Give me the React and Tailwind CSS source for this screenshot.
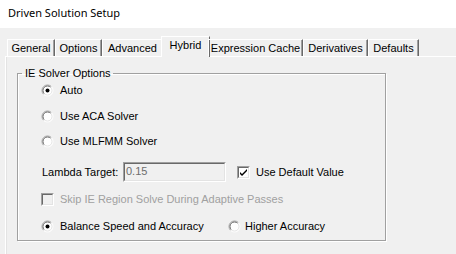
const F = { fontFamily: '"Liberation Sans", Arial, sans-serif' };

function Radio({ checked }) {
  return (
    <svg width="13" height="13" viewBox="0 0 13 13" className="shrink-0">
      <circle cx="6.5" cy="6.5" r="5.5" fill="#ffffff" />
      <path d="M2.6 10.4 A5.5 5.5 0 0 1 10.4 2.6" fill="none" stroke="#a0a0a0" strokeWidth="1" />
      <path d="M3.3 9.7 A4.5 4.5 0 0 1 9.7 3.3" fill="none" stroke="#696969" strokeWidth="1" />
      <path d="M10.4 2.6 A5.5 5.5 0 0 1 2.6 10.4" fill="none" stroke="#ffffff" strokeWidth="1" />
      <path d="M9.7 3.3 A4.5 4.5 0 0 1 3.3 9.7" fill="none" stroke="#e3e3e3" strokeWidth="1" />
      {checked && <circle cx="6.5" cy="6.5" r="2" fill="#000000" />}
    </svg>
  );
}

function Check({ checked, disabled }) {
  return (
    <div
      className={`w-[13px] h-[13px] shrink-0 border border-t-[#a0a0a0] border-l-[#a0a0a0] border-b-white border-r-white ${disabled ? 'bg-[#f0f0f0]' : 'bg-white'}`}
    >
      <div className="w-full h-full border border-t-[#696969] border-l-[#696969] border-b-[#e3e3e3] border-r-[#e3e3e3] flex items-center justify-center">
        {checked && (
          <svg width="7" height="7" viewBox="0 0 7 7">
            <path d="M0 3 L0 5 L2 7 L7 2 L7 0 L2 5 Z" fill="#000" />
          </svg>
        )}
      </div>
    </div>
  );
}

export default function App() {
  const tabs = [
    ['General', 48],
    ['Options', 47],
    ['Advanced', 61],
    ['Hybrid', 45, true],
    ['Expression Cache', 95],
    ['Derivatives', 65],
    ['Defaults', 51],
  ];
  return (
    <div className="w-[456px] h-[254px] overflow-hidden bg-[#f0f0f0] text-[11px] text-black" style={F}>
      <div
        className="h-[28px] bg-white pl-[8px] pt-[5px] text-[11px] leading-[16px] text-[#000]"
        style={{ fontFamily: '"Noto Sans", "Open Sans", sans-serif' }}
      >
        Driven Solution Setup
      </div>
      <div className="mt-[8px] h-[21px] -mb-px pl-[7px] flex items-start relative z-10">
        {tabs.map(([t, w, active]) =>
          active ? (
            <div
              key={t}
              className="h-[21px] -mx-[2px] bg-[#f0f0f0] border-t border-l border-t-white border-l-white border-r border-r-[#696969] flex items-start justify-center pt-[2px] leading-[13px]"
              style={{ width: w + 4 }}
            >
              {t}
            </div>
          ) : (
            <div
              key={t}
              className="mt-[3px] h-[17px] border-t border-l border-t-white border-l-white border-r border-r-[#696969] flex items-center justify-center leading-[13px] shadow-[inset_-1px_0_0_#a0a0a0]"
              style={{ width: w }}
            >
              {t}
            </div>
          )
        )}
      </div>
      <div className="ml-[5px] h-[220px] border-t border-l border-t-white border-l-white shadow-[inset_1px_0_0_#e3e3e3] pl-[11px] pt-[10px]">
        <fieldset className="w-[369px] border border-[#a0a0a0] shadow-[1px_1px_0_#ffffff,inset_1px_1px_0_#ffffff] pl-[23px] pb-[6px]">
          <legend className="-ml-[19px] pl-[3px] pr-[2px] leading-[13px]">IE Solver Options</legend>
          <div className="mt-[2px] h-[16px] flex items-center gap-[6px]">
            <Radio checked />
            <span>Auto</span>
          </div>
          <div className="mt-[10px] h-[16px] flex items-center gap-[6px]">
            <Radio />
            <span>Use ACA Solver</span>
          </div>
          <div className="mt-[9px] h-[16px] flex items-center gap-[6px]">
            <Radio />
            <span>Use MLFMM Solver</span>
          </div>
          <div className="mt-[13px] h-[20px] flex items-center">
            <span className="pl-px w-[82px]">Lambda Target:</span>
            <div className="w-[103px] h-[20px] border border-t-[#a0a0a0] border-l-[#a0a0a0] border-b-white border-r-white">
              <div className="w-full h-full border border-t-[#696969] border-l-[#696969] border-b-[#e3e3e3] border-r-[#e3e3e3] pl-[1px] leading-[14px] text-[#6d6d6d]">
                0.15
              </div>
            </div>
            <div className="ml-[11px] flex items-center gap-[6px]">
              <Check checked />
              <span>Use Default Value</span>
            </div>
          </div>
          <div className="mt-[9px] h-[16px] flex items-center gap-[6px]">
            <Check disabled />
            <span className="text-[#a0a0a0]">Skip IE Region Solve During Adaptive Passes</span>
          </div>
          <div className="mt-[11px] h-[16px] flex items-center">
            <div className="w-[187px] flex items-center gap-[6px]">
              <Radio checked />
              <span>Balance Speed and Accuracy</span>
            </div>
            <div className="flex items-center gap-[4px]">
              <Radio />
              <span>Higher Accuracy</span>
            </div>
          </div>
        </fieldset>
      </div>
    </div>
  );
}
